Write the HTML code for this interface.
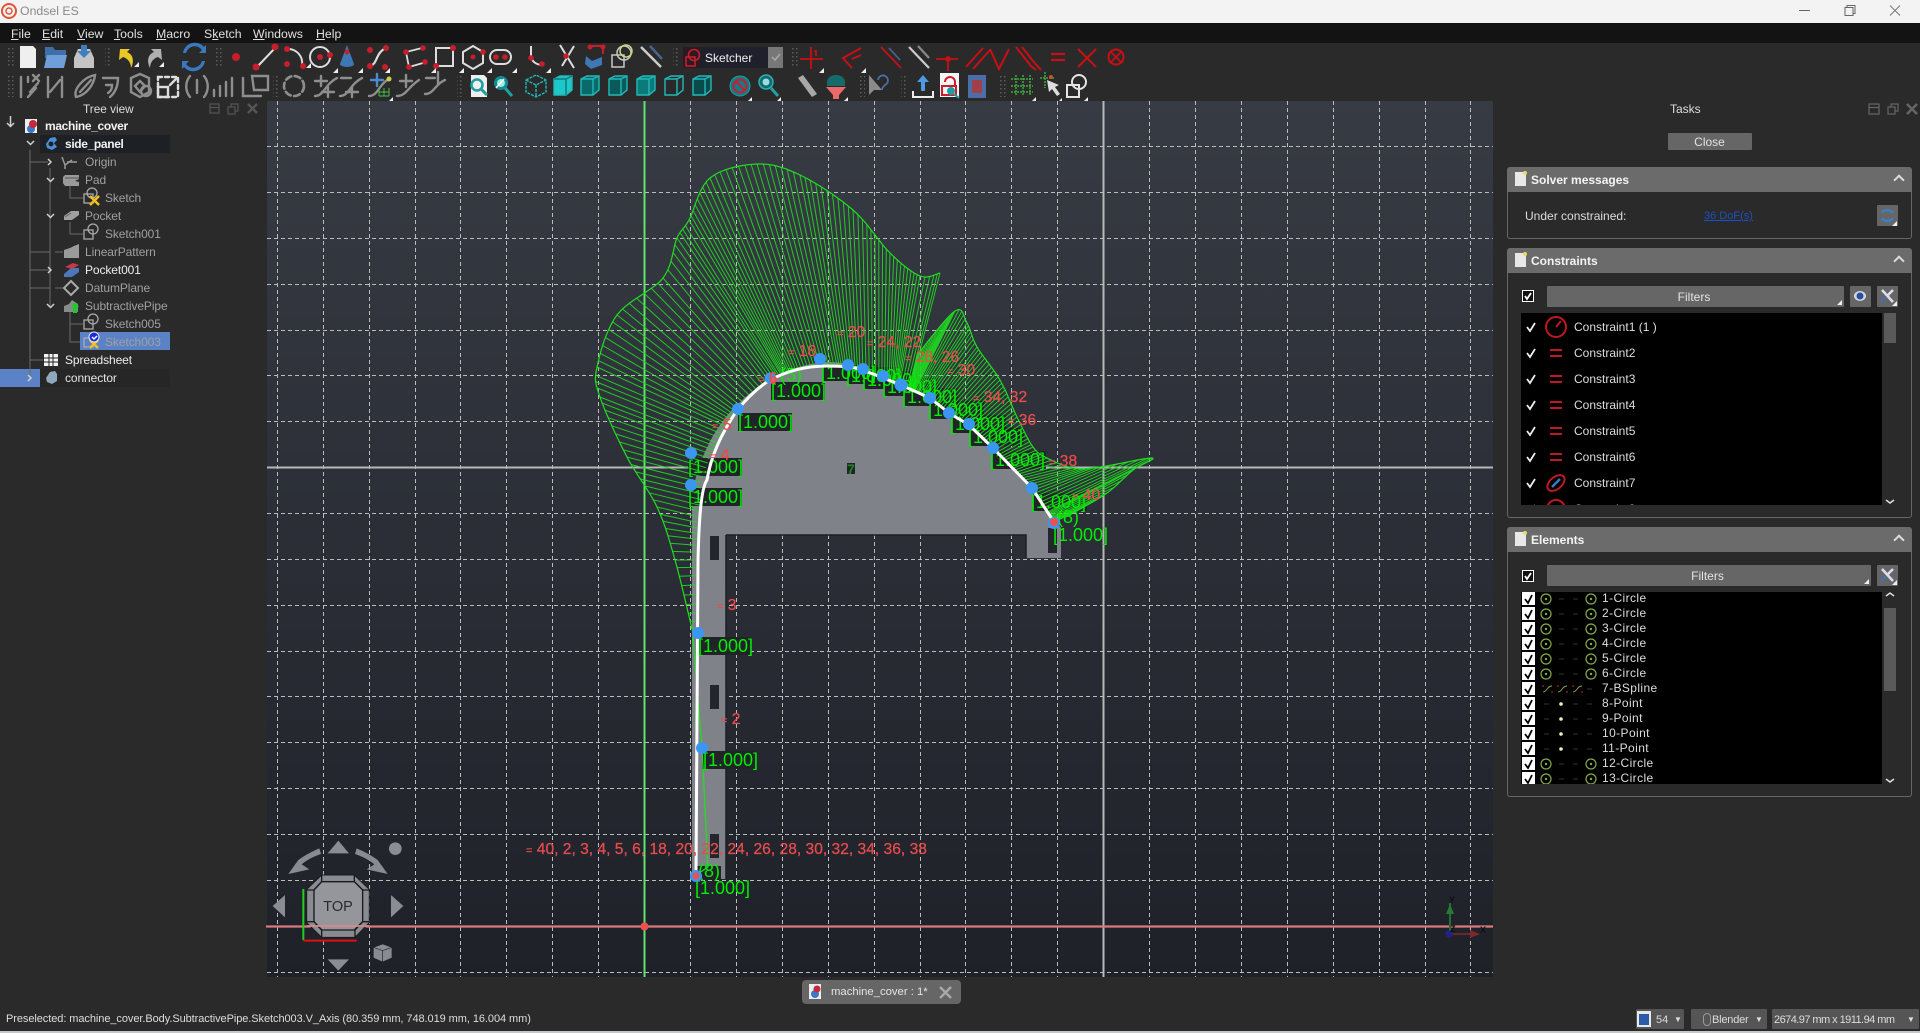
<!DOCTYPE html>
<html><head><meta charset="utf-8"><title>Ondsel ES</title>
<style>
html,body{margin:0;padding:0;width:1920px;height:1033px;overflow:hidden;background:#2a2a2a;font-family:"Liberation Sans",sans-serif;color:#ddd;font-size:12px}
.a{position:absolute;white-space:nowrap}
#title{left:0;top:0;width:1920px;height:23px;background:#f3f3f3}
#menu{left:0;top:23px;width:1920px;height:20px;background:#131313}
#menu span{position:absolute;top:4px;color:#e0e0e0;font-size:12.3px}
#menu u{text-decoration:underline}
.row{position:absolute;line-height:18px;height:18px;font-size:12px;color:#a0a0a0;letter-spacing:-.1px}
.row.bd{font-weight:bold;letter-spacing:-.35px;color:#f2f2f2}
.hdr{position:absolute;left:1507px;width:405px;height:25px;background:#6b6b6b;border-radius:3px 3px 0 0;color:#f4f4f4;font-weight:bold;font-size:12px;line-height:27px}
.hdr b{position:absolute;left:24px;top:0}
.hdr i{position:absolute;left:8px;top:5px;width:11px;height:14px;background:#e8e8e8;border-top-right-radius:3px}
.hdr i:after{content:"";position:absolute;right:-1px;top:-1px;width:4px;height:4px;background:#e8e060;border-radius:2px}
.hdr s{position:absolute;right:9px;top:9px;width:6px;height:6px;border-left:2px solid #ddd;border-top:2px solid #ddd;transform:rotate(45deg)}
.body{position:absolute;left:1507px;width:403px;border:1px solid #666;border-top:none;border-radius:0 0 3px 3px}
.btn{position:absolute;background:#666;border-radius:1px;color:#e4e4e4;text-align:center;font-size:12px}
.cb{position:absolute;width:10px;height:10px;border:1px solid #fff;background:#111}
.list{position:absolute;background:#000;overflow:hidden}
.c{position:absolute;left:53px;color:#ddd;font-size:12px;line-height:14px}
.e{position:absolute;left:81px;color:#ddd;font-size:12px;letter-spacing:.4px;line-height:14px}
.st{position:absolute;background:#555;color:#ddd;height:20px;line-height:22px;font-size:11px;border-radius:1px}
svg{position:absolute;left:0;top:0}
.lb{fill:#00ee00;font:18px "Liberation Sans",sans-serif}
.lr{fill:#212329}
.rd{fill:#e84c4c;stroke:#e84c4c;stroke-width:.25px;font:15.6px "Liberation Sans",sans-serif}
.sm{font-size:11px}
</style></head><body>
<div id="title" class="a"></div>
<div class="a" style="left:20px;top:4px;color:#8a8a8a;font-size:12.3px">Ondsel ES</div>
<svg width="1920" height="23" style="left:0;top:0">
<circle cx="9" cy="11" r="7" fill="none" stroke="#e0553a" stroke-width="2"/><circle cx="9" cy="11" r="3" fill="none" stroke="#e0553a" stroke-width="1.500"/>
<path d="M1799 10.500h11" stroke="#666" stroke-width="1"/>
<rect x="1845" y="7.500" width="8" height="8" fill="none" stroke="#666"/><path d="M1847 7.500v-2h8v8h-2" fill="none" stroke="#666"/>
<path d="M1890 5.500l10 10m0-10l-10 10" stroke="#777" stroke-width="1"/>
</svg>
<div id="menu" class="a">
<span style="left:11px"><u>F</u>ile</span><span style="left:42px"><u>E</u>dit</span><span style="left:77px"><u>V</u>iew</span><span style="left:114px"><u>T</u>ools</span><span style="left:156px"><u>M</u>acro</span><span style="left:204px">S<u>k</u>etch</span><span style="left:253px"><u>W</u>indows</span><span style="left:316px"><u>H</u>elp</span>
</div>

<!-- TOOLBARS -->
<svg width="1920" height="102" style="top:0">
<defs>
<pattern id="gd" width="4" height="4" patternUnits="userSpaceOnUse"><rect width="1.500" height="1.500" fill="#5c5c5c"/></pattern>
<g id="tri"><path d="M0 0l-5 5h5z" fill="#eee"/></g>
</defs>
<g fill="url(#gd)">
<rect x="8" y="46" width="7" height="22"/><rect x="105" y="46" width="7" height="22"/><rect x="216" y="46" width="7" height="22"/><rect x="673" y="46" width="7" height="22"/><rect x="791" y="46" width="7" height="22"/>
<rect x="8" y="75" width="7" height="22"/><rect x="273" y="75" width="7" height="22"/><rect x="457" y="75" width="7" height="22"/><rect x="858" y="75" width="7" height="22"/><rect x="901" y="75" width="7" height="22"/><rect x="999" y="75" width="7" height="22"/>
</g>
<!-- row 1 -->
<path d="M20 46h13l3 3v19H20z" fill="#efefef"/>
<path d="M45 47h8l2 3h11v8H45z" fill="#3f6ea8"/><path d="M47 55h20l-3 13H44z" fill="#6f9fd8"/>
<path d="M74 58l4-9h12l4 9v10H74z" fill="#c4c4c4"/><path d="M81 45h6v6h4l-7 7-7-7h4z" fill="#3f7fc0"/>
<path d="M120 49l-1 11 4-3c4 1 8 5 8 11 3-6 3-13-4-16l3-3z" fill="#e8c828"/><use href="#tri" x="139" y="62"/>
<path d="M161 49l1 11-4-3c-4 1-8 5-8 11-3-6-3-13 4-16l-3-3z" fill="#b0b0b0"/><use href="#tri" x="164" y="62"/>
<path d="M186 53a9 9 0 0 1 16-3l-3 3h7v-8l-2 2a12 12 0 0 0-21 6zM202 61a9 9 0 0 1-16 3l3-3h-7v8l2-2a12 12 0 0 0 21-6z" fill="#3a78c0"/>
<circle cx="236" cy="57" r="4" fill="#c81e2c"/>
<g fill="#c81e2c"><path d="M257 67l19-20" stroke="#ddd" stroke-width="2"/><circle cx="256" cy="67" r="3.500"/><circle cx="275" cy="47" r="3.500"/>
<path d="M287 49a14 14 0 0 1 15 16" stroke="#ddd" stroke-width="2" fill="none"/><circle cx="287" cy="49" r="3"/><circle cx="287" cy="64" r="3"/><circle cx="303" cy="66" r="3"/>
<circle cx="320" cy="57" r="10" fill="none" stroke="#ddd" stroke-width="2"/><circle cx="320" cy="57" r="3"/><circle cx="330" cy="55" r="3"/>
<path d="M340 64l7-19 7 19a7 3 0 0 1-14 0z" fill="#3d78b4"/><circle cx="347" cy="52" r="2.500"/>
<path d="M370 66c8-2 5-13 16-18" stroke="#ddd" stroke-width="2.200" fill="none"/><circle cx="370" cy="50" r="3"/><circle cx="386" cy="48" r="3"/><circle cx="370" cy="66" r="3"/><circle cx="385" cy="67" r="3"/>
<path d="M422 48l-16 4 3 15 14-4" stroke="#ddd" stroke-width="1.800" fill="none"/><circle cx="406" cy="52" r="2.800"/><circle cx="423" cy="48" r="2.800"/><circle cx="409" cy="67" r="2.800"/><circle cx="425" cy="62" r="2.800"/>
<rect x="436" y="48" width="17" height="18" fill="none" stroke="#ddd" stroke-width="2"/><circle cx="436" cy="66" r="3"/><circle cx="453" cy="48" r="3"/>
<path d="M473 46l10 6v11l-10 6-10-6V52z" fill="none" stroke="#ddd" stroke-width="2"/><circle cx="473" cy="57" r="2.500" /><circle cx="483" cy="52" r="2.800"/>
<rect x="490" y="50" width="21" height="14" rx="7" fill="none" stroke="#ddd" stroke-width="2"/><circle cx="496" cy="57" r="2.800"/><circle cx="505" cy="57" r="2.800"/>
<path d="M531 46v9c0 7 6 10 12 10" stroke="#ddd" stroke-width="2" fill="none"/><circle cx="531" cy="58" r="2.800"/><circle cx="542" cy="64" r="2.800"/>
<path d="M560 45l14 23M574 46l-12 20" stroke="#ddd" stroke-width="2"/><circle cx="566" cy="56" r="2.800"/>
<path d="M586 56l6 5 10-4v8l-11 4-6-5z" fill="#3f78b4"/><path d="M591 46h12v8" stroke="#c81e2c" stroke-width="2" fill="none"/><circle cx="590" cy="47" r="2.500"/><circle cx="603" cy="47" r="2.500"/>
</g>
<use href="#tri" x="311" y="63"/><use href="#tri" x="338" y="68"/><use href="#tri" x="363" y="68"/><use href="#tri" x="390" y="68"/><use href="#tri" x="436" y="68"/><use href="#tri" x="464" y="68"/><use href="#tri" x="492" y="68"/><use href="#tri" x="517" y="68"/><use href="#tri" x="551" y="68"/>
<g fill="none" stroke="#c8c8c8" stroke-width="1.500"><rect x="612" y="55" width="12" height="12"/><circle cx="624" cy="53" r="7"/><circle cx="626" cy="51" r="6" stroke="#c8d878"/></g>
<path d="M641 47l20 20" stroke="#ccc" stroke-width="2.500"/><path d="M650 46l12 13" stroke="#49648a" stroke-width="2.500"/>
<rect x="683" y="47" width="100" height="21" fill="#20202c"/><rect x="683" y="47" width="17" height="21" fill="#2c1a22"/>
<g fill="none" stroke="#c81e2c" stroke-width="1.600"><rect x="686" y="57" width="9" height="9"/><circle cx="694" cy="55" r="5.500"/></g>
<text x="705" y="62" fill="#f0f0f0" font-size="12" font-family="Liberation Sans">Sketcher</text>
<rect x="768" y="47" width="15" height="21" fill="#777"/><path d="M772 57l3 3 5-6" stroke="#aaa" stroke-width="1.500" fill="none"/>
<!-- constraints -->
<g fill="none" stroke="#c81014" stroke-width="1.800">
<path d="M800 59h23M811 47v22M814 51h2v5"/><use href="#tri" x="824" y="68" stroke="none"/>
<path d="M861 48l-18 10 9 10M861 55l-9 4" stroke-width="2"/><use href="#tri" x="866" y="68" stroke="none"/>
<path d="M881 47l20 21"/><path d="M889 48l11 12" stroke="#4a5c88"/>
<path d="M909 47l20 21" stroke="#ccc" stroke-width="2.200"/><path d="M918 46l11 12" stroke="#8a8a8a" stroke-width="2.200"/>
<path d="M936 59h22M948 59v12"/><circle cx="948" cy="59" r="2" fill="#c81014"/>
<path d="M966 67l17-19M973 69l17-19" stroke-width="2"/>
<path d="M990 49l9 20 10-20" stroke-width="2"/>
<path d="M1016 47l15 19 5 4M1022 47l11 14 8 9" stroke-width="2"/>
<path d="M1051 54h14M1051 60h14" stroke-width="2.200"/>
<path d="M1078 49l9 9-9 9M1096 49l-9 9 9 9" stroke-width="2"/>
<circle cx="1116" cy="57" r="7.500" stroke-width="2"/><path d="M1110 51l12 12m0-12l-12 12"/>
</g>
<!-- row 2 grays -->
<g fill="none" stroke="#8e8e8e" stroke-width="2.400" stroke-linecap="round">
<path d="M21 77v20M28 77v5M28 97l8-9M30 92l8-9M33 75l6 6m0-6l-6 6"/>
<path d="M48 77v20M62 77v20M50 92l10-12"/>
<path d="M76 97c-3-8 8-20 19-22-1 9-8 20-19 22zM80 92l11-12"/>
<path d="M103 78h15c0 8-3 15-8 19M106 85h6c0 4-1 6-4 8"/>
<path d="M131 78l9-4 9 4v14l-9 5-9-5zM135 86l5-5 5 5-5 6z"/><circle cx="146" cy="91" r="5"/>
<path d="M158 77h20v20h-20z" stroke-dasharray="4 3" stroke="#ddd"/><rect x="158" y="87" width="10" height="10" stroke="#ddd"/><path d="M170 85l6-6" stroke="#ddd"/>
<path d="M190 76c-5 6-5 15 0 21M204 76c5 6 5 15 0 21M197 80v13"/>
<path d="M214 96v-6M220 96v-10M226 96v-14M232 96v-18"/>
<path d="M243 78v18h18M252 76h16v14h-14z"/>
<circle cx="294" cy="86" r="10" stroke-dasharray="6 3.500" stroke-width="2.600"/>
<path d="M315 96c9 0 10-12 22-18M321 76v10M315 81h12M328 87v10M322 92h12"/>
<path d="M340 96c9 0 10-12 22-18M341 78h10M352 87v10M346 92h12"/>
<path d="M369 96c9 0 10-12 20-17"/><path d="M371 80h12M377 74v12" stroke="#4c8ad0"/>
<path d="M397 96c9 0 10-8 22-16M400 81h12M406 75v12"/>
<path d="M425 94c9 0 10-10 20-14M426 78h9M438 72v12"/>
</g>
<circle cx="389" cy="79" r="2.500" fill="#c8d050"/><path d="M379 92h10M379 88v8M384 88v8M389 88v8M379 96h10" stroke="#4cc04c" fill="none"/><use href="#tri" x="393" y="97"/>
<!-- view icons -->
<path d="M471 75h13l3 3v19h-16z" fill="#efefef"/><circle cx="477" cy="85" r="5.500" fill="none" stroke="#1ea0a0" stroke-width="2.500"/><path d="M481 89l6 6" stroke="#1ea0a0" stroke-width="3"/>
<circle cx="501" cy="83" r="7" fill="#158a96"/><circle cx="501" cy="83" r="4" fill="#9ed"/><path d="M505 88l7 8" stroke="#1ea0a0" stroke-width="3"/><path d="M496 88l8-9" stroke="#fff" stroke-width="1.500"/>
<g fill="none" stroke="#22b8b8" stroke-width="1.400">
<path d="M526 80l10-5 10 5v12l-10 5-10-5zM526 80l10 5 10-5M536 85v12" stroke-dasharray="3 1"/>
<path d="M554 79l6-3h12v14l-6 5h-12z" fill="#1fc8c8"/><path d="M554 79h12v16M566 79l6-3" stroke="#0c7878"/>
<path d="M581 79l6-3h12v14l-6 5h-12z" fill="#0a6a6a"/><path d="M581 79h12v16M593 79l6-3"/>
<path d="M609 79l6-3h12v14l-6 5h-12z" fill="#0a5a5a"/><path d="M609 79h12v16M621 79l6-3"/>
<path d="M637 79l6-3h12v14l-6 5h-12z" fill="#0c7a7a"/><path d="M637 79h12v16M649 79l6-3"/>
<path d="M665 79l6-3h12v14l-6 5h-12z"/><path d="M665 79h12v16M677 79l6-3"/>
<path d="M693 79l6-3h12v14l-6 5h-12z" fill="#0a4a4a"/><path d="M693 79h12v16M705 79l6-3"/>
</g>
<circle cx="740" cy="86" r="10" fill="#137a8a" stroke="#1ea0a0"/><circle cx="740" cy="86" r="6.500" fill="none" stroke="#d01c2a" stroke-width="2"/><path d="M736 81l9 10" stroke="#d01c2a" stroke-width="2"/><use href="#tri" x="752" y="97"/>
<circle cx="766" cy="82" r="7" fill="#146a74" stroke="#2ab0b0" stroke-width="1.500"/><circle cx="766" cy="82" r="3.500" fill="#9dd"/><path d="M771 88l7 8" stroke="#20a0a0" stroke-width="3"/><use href="#tri" x="781" y="97"/>
<path d="M798 78l5-3 14 19-5 3z" fill="#a8a8a8"/>
<path d="M827 82a9 7 0 0 1 18 0v4h-18z" fill="#176a6a"/><path d="M826 87h20l-7 8v4h-6v-4z" fill="#e86a6a"/><use href="#tri" x="848" y="97"/>
<path d="M869 75v20l5-5h8z" fill="#8a8a8a"/><path d="M878 80a5 5 0 1 1 7 5c-2 2-3 3-3 5" fill="none" stroke="#4c6ea0" stroke-width="1.800"/>
<path d="M913 91v6h20v-6" fill="none" stroke="#eee" stroke-width="2"/><path d="M923 75l6 7h-4v9h-4v-9h-4z" fill="#4c9ae0"/>
<rect x="940" y="73" width="19" height="24" fill="#f4f4f4"/><path d="M945 82a5 5 0 0 1 10 0v4M942 86h14v9h-14z" fill="none" stroke="#d01c2a" stroke-width="2"/><circle cx="951" cy="91" r="4" fill="#1aa0a0"/><path d="M954 94l5 4" stroke="#1aa0a0" stroke-width="2"/>
<rect x="968" y="75" width="18" height="23" fill="#4c6ea8"/><rect x="972" y="80" width="10" height="13" fill="#a0404a"/>
<g stroke="#3fa83f" stroke-width="1.500" stroke-dasharray="2 1"><path d="M1016 75v20M1023 75v20M1030 75v20M1011 79h22M1011 86h22M1011 92h22"/></g><use href="#tri" x="1036" y="97"/>
<path d="M1045 72v16M1040 78h14" stroke="#3fa83f" stroke-width="1.500" stroke-dasharray="2 1"/><circle cx="1051" cy="77" r="2" fill="#d05020"/><path d="M1047 80l12 5-4 2 5 7-3 2-5-7-3 3z" fill="#ddd"/><use href="#tri" x="1062" y="98"/>
<g fill="none" stroke="#e4e4e4" stroke-width="2"><rect x="1067" y="85" width="12" height="12"/><circle cx="1079" cy="82" r="7"/></g><use href="#tri" x="1088" y="97"/>
</svg>

<!-- TREE -->
<div class="a" style="left:83px;top:102px;color:#ddd;font-size:11.800px;">Tree view</div>
<svg width="270" height="290" style="top:100px" viewBox="0 100 270 290">
<g fill="none" stroke="#555" stroke-width="1.200"><rect x="210" y="104" width="9" height="9"/><path d="M210 107.500h9"/><rect x="228" y="107" width="7" height="7"/><path d="M231 107v-3h7v7h-3"/><path d="M248 104l9 9m0-9l-9 9" stroke-width="2.500"/></g>
</svg>
<div class="a" style="left:40px;top:135px;width:130px;height:18px;background:#1d2126"></div>
<div class="a" style="left:80px;top:332px;width:90px;height:18px;background:#5b82c6"></div>
<div class="a" style="left:0;top:369px;width:40px;height:18px;background:#5b82c6"></div>
<div class="a" style="left:40px;top:369px;width:130px;height:18px;background:#262626"></div>
<svg width="270" height="400" style="top:0">
<g stroke="#6a6a6a" fill="none">
<path d="M30 150V378M50 168V306M30 360h13M30 162h18M55 252h8M55 288h8M30 252h20M30 288h20M30 270h20M70 186v12h13M70 222v12h13M70 312v30h10M70 324h13"/>
</g>
<g fill="none" stroke="#d0d0d0" stroke-width="1.500">
<path d="M7 123l3.500 3.500 3.500-3.500M27 141l3.500 3.500 3.500-3.500M47 178l3.500 3.500 3.500-3.500M47 214l3.500 3.500 3.500-3.500M47 304l3.500 3.500 3.500-3.500M48 159l3 3-3 3M48 267l3 3-3 3M28 375l3 3-3 3"/><path d="M10.500 116v10"/></g>
<!-- icons -->
<rect x="25" y="119" width="12" height="14" fill="#eee"/><circle cx="31" cy="129" r="4" fill="#3a78c8"/><circle cx="33" cy="124" r="4" fill="#c82838"/>
<path d="M46 144l4-6 5-1 2 3-3 3 3 4-5 3-5-2z" fill="#4c90d8"/><circle cx="51" cy="144" r="2.500" fill="#1d2126"/>
<path d="M46 378l4-6 5-1 2 3v7l-5 3-5-2z" fill="#90a8bc"/>
<path d="M65 165l7-5m-7 5v4m0-4l-3-8M67 162h10" stroke="#999" stroke-width="1.500" fill="none"/>
<path d="M65 175h14v4l-4 2 4 1v4h-14l-2-3v-6z" fill="#9a9a9a"/><path d="M65 178h14" stroke="#555"/>
<path d="M64 216l7-5h8v4l-7 5h-8z" fill="#a0a0a0"/><path d="M65 217l6-4" stroke="#666"/>
<path d="M64 258v-8l6-2 4-2 5-2v14z" fill="#9a9a9a"/>
<path d="M71 281l7 7-7 7-7-7z" fill="none" stroke="#aaa" stroke-width="2"/>
<path d="M64 274l7-6 8 0v4l-7 5h-8z" fill="#4a78b8"/><path d="M65 267l8-4 6 2-7 4z" fill="#c83a48"/>
<path d="M64 312v-6l5-2 3-4 6 4v8z" fill="#8a8a8a"/><path d="M75 302l4 5h-2v6h-4v-6h-2z" fill="#1aca2a"/>
<g fill="#f4f4f4"><rect x="44" y="354" width="14" height="12"/></g><path d="M44 358h14M44 362h14M49 354v12M53 354v12" stroke="#222"/>
<g fill="none" stroke="#aaa" stroke-width="1.300"><rect x="84" y="194" width="9" height="9"/><circle cx="92" cy="193" r="5"/></g>
<path d="M90 196l9 9m0-9l-9 9" stroke="#f0c020" stroke-width="2.500"/>
<g fill="none" stroke="#aaa" stroke-width="1.300"><rect x="84" y="230" width="9" height="9"/><circle cx="93" cy="229" r="5"/><rect x="84" y="320" width="9" height="9"/><circle cx="93" cy="319" r="5"/><rect x="84" y="338" width="9" height="9"/></g>
<path d="M90 340l8 8m0-8l-8 8" stroke="#f0c020" stroke-width="2.500"/>
<circle cx="94" cy="337" r="5" fill="#1a2ad8" stroke="#eee"/><path d="M92 337l2 2 3-3" stroke="#fff" fill="none" stroke-width="1.500"/>
</svg>
<div class="row bd" style="left:45px;top:117px">machine_cover</div>
<div class="row bd" style="left:65px;top:135px">side_panel</div>
<div class="row" style="left:85px;top:153px">Origin</div>
<div class="row" style="left:85px;top:171px">Pad</div>
<div class="row" style="left:105px;top:189px">Sketch</div>
<div class="row" style="left:85px;top:207px">Pocket</div>
<div class="row" style="left:105px;top:225px">Sketch001</div>
<div class="row" style="left:85px;top:243px">LinearPattern</div>
<div class="row" style="left:85px;top:261px;color:#eee">Pocket001</div>
<div class="row" style="left:85px;top:279px">DatumPlane</div>
<div class="row" style="left:85px;top:297px">SubtractivePipe</div>
<div class="row" style="left:105px;top:315px">Sketch005</div>
<div class="row" style="left:105px;top:333px">Sketch003</div>
<div class="row" style="left:65px;top:351px;color:#eee">Spreadsheet</div>
<div class="row" style="left:65px;top:369px;color:#e4e4e4">connector</div>

<!-- VIEW -->
<svg width="1920" height="1033" style="top:0" id="v">
<defs><linearGradient id="bg" x1="0" y1="0" x2="0" y2="1"><stop offset="0" stop-color="#373b44"/><stop offset="1" stop-color="#1f2129"/></linearGradient></defs>
<rect x="267" y="101" width="1226" height="876" fill="url(#bg)"/>
<g id="grid" stroke="#bcbcbc" stroke-width="1" stroke-dasharray="4 3" fill="none">
<path d="M267 146.500H1493M267 192.500H1493M267 238.500H1493M267 284.500H1493M267 330.500H1493M267 375.500H1493M267 421.500H1493M267 513.500H1493M267 559.500H1493M267 605.500H1493M267 651.500H1493M267 696.500H1493M267 742.500H1493M267 788.500H1493M267 834.500H1493M267 880.500H1493M267 972.500H1493"/>
<path d="M277.500 101V977M323.500 101V977M369.500 101V977M415.500 101V977M460.500 101V977M506.500 101V977M552.500 101V977M598.500 101V977M690.500 101V977M736.500 101V977M782.500 101V977M828.500 101V977M874.500 101V977M920.500 101V977M965.500 101V977M1011.500 101V977M1057.500 101V977M1149.500 101V977M1195.500 101V977M1241.500 101V977M1287.500 101V977M1333.500 101V977M1379.500 101V977M1425.500 101V977M1470.500 101V977"/>
</g>
<path d="M267 467.500H1493M1103.500 101V977" stroke="#b8b8b8" stroke-width="2"/>
<path d="M266 926.500H1493" stroke="#d87a7a" stroke-width="2.200"/>
<path d="M644.500 101V977" stroke="#5fe46c" stroke-width="2"/>
<circle cx="644.500" cy="926.500" r="4" fill="#ee5050"/>
<!-- part -->
<path d="M692 879V500C694 470 712 428 737 405C760 382 790 365 825 362C860 362 880 372 903 385L930 398L949 411L970 424L993 447L1032 488L1061 528V558H1026V535H726V879Z" fill="#80828a"/>
<path d="M726 535H1026V558" fill="none" stroke="#1c1e24" stroke-width="1.500"/><path d="M726 535V879" stroke="#1c1e24" stroke-width="1.500"/>
<g fill="#24262d"><rect x="710" y="536" width="9" height="24"/><rect x="710" y="685" width="9" height="24"/><rect x="710" y="834" width="9" height="24"/><rect x="1048" y="528" width="9" height="25"/></g>
<!-- label backgrounds -->
<g class="lr">
<rect x="823" y="365" width="54" height="16"/><rect x="848" y="367" width="54" height="17"/><rect x="864" y="371" width="54" height="18"/><rect x="884" y="378" width="54" height="18"/><rect x="904" y="388" width="54" height="18"/><rect x="930" y="401" width="54" height="18"/><rect x="952" y="415" width="54" height="18"/><rect x="970" y="428" width="54" height="18"/><rect x="992" y="451" width="54" height="18"/><rect x="1033" y="493" width="54" height="18"/><rect x="771" y="382" width="54" height="18"/><rect x="738" y="413" width="54" height="18"/><rect x="688" y="458" width="54" height="18"/><rect x="688" y="488" width="54" height="18"/><rect x="697" y="637" width="54" height="18"/><rect x="702" y="751" width="54" height="18"/><rect x="697" y="866" width="24" height="13"/>
<rect x="847" y="463" width="8" height="11"/>
</g>
<g id="comb"></g>
<path d="M693 637L702 748L708 867L696 875" fill="none" stroke="#22dd22" stroke-width="1.300"/>
<!-- labels text -->
<g class="lb" transform="translate(-3,0)">
<text x="824" y="379">[1.000]</text><text x="849" y="382">[1.000]</text><text x="865" y="386">[1.000]</text><text x="885" y="393">[1.000]</text><text x="905" y="403">[1.000]</text><text x="931" y="416">[1.000]</text><text x="953" y="430">[1.000]</text><text x="971" y="443">[1.000]</text><text x="993" y="466">[1.000]</text><text x="1034" y="508">[1.000]</text><text x="1056" y="541">[1.000]</text>
<text x="774" y="397">[1.000]</text><text x="741" y="428">[1.000]</text><text x="691" y="473">[1.000]</text><text x="691" y="503">[1.000]</text><text x="701" y="652">[1.000]</text><text x="706" y="766">[1.000]</text><text x="698" y="894">[1.000]</text>
<text x="701" y="877">(8)</text><text x="1060" y="523">(8)</text><text x="783" y="381">(5)</text>
<text x="850" y="474" style="font-size:14px;font-weight:bold;fill:#1a8a1a">7</text>
</g>
<path d="M696 875L698 560C699 520 701 488 707 480C711 455 722 432 738 409C750 395 760 386 770 380C785 372 805 366 827 366C840 366 855 367 863 370L901 385L930 398L949 413L969 425L993 448L1032 488L1054 522" fill="none" stroke="#fff" stroke-width="3" stroke-linejoin="round"/>
<g fill="#3a96f0">
<circle cx="691" cy="453" r="6"/><circle cx="691" cy="485" r="6"/><circle cx="738" cy="409" r="6"/><circle cx="770" cy="378" r="5.500"/><circle cx="820" cy="359" r="6"/><circle cx="848" cy="365" r="6"/><circle cx="863" cy="369" r="6"/><circle cx="883" cy="376" r="6"/><circle cx="901" cy="385" r="6.500"/><circle cx="930" cy="398" r="6"/><circle cx="949" cy="413" r="6"/><circle cx="969" cy="424" r="6"/><circle cx="993" cy="448" r="6"/><circle cx="1032" cy="488" r="6"/><circle cx="1054" cy="523" r="6"/><circle cx="698" cy="633" r="6"/><circle cx="702" cy="748" r="6"/><circle cx="696" cy="876" r="6"/>
</g>
<circle cx="1054" cy="522" r="4" fill="#ee5050"/><circle cx="696" cy="876" r="3.500" fill="#ee5050"/><circle cx="773" cy="381" r="3" fill="#e06070"/>
<!-- red text -->
<g class="rd">
<text x="526" y="854"><tspan class="sm">=</tspan> 40, 2, 3, 4, 5, 6, 18, 20, 22, 24, 26, 28, 30, 32, 34, 36, 38</text>
<text x="788" y="356"><tspan class="sm">=</tspan> 18</text><text x="837" y="337"><tspan class="sm">=</tspan> 20</text><text x="867" y="347"><tspan class="sm">=</tspan> 24, 22</text><text x="905" y="362"><tspan class="sm">=</tspan> 28, 26</text><text x="947" y="375"><tspan class="sm">=</tspan> 30</text><text x="973" y="402"><tspan class="sm">=</tspan> 34, 32</text><text x="1008" y="425"><tspan class="sm">=</tspan> 36</text><text x="1049" y="466"><tspan class="sm">=</tspan> 38</text><text x="1072" y="500"><tspan class="sm">=</tspan> 40</text><text x="712" y="430"><tspan class="sm">=</tspan> 5</text><text x="710" y="460"><tspan class="sm">=</tspan> 4</text><text x="758" y="383"><tspan class="sm">=</tspan> 6</text><text x="717" y="610"><tspan class="sm">=</tspan> 3</text><text x="721" y="724"><tspan class="sm">=</tspan> 2</text>
</g>
<!-- nav cube -->
<g transform="translate(260,820) scale(.3333)">
<path d="M185 165H283L328 208V308L285 352H185L140 308V208Z" fill="#888b91" stroke="#1a1a1a" stroke-width="3"/>
<path d="M185 185H283L308 210V305L283 330H185L162 305V210Z" fill="#94969c" stroke="#1a1a1a" stroke-width="4"/>
<path d="M185 165V185L162 210H140M283 165V185L308 210H328M285 352V330L308 305H328M185 352V330L162 305H140" fill="none" stroke="#1a1a1a" stroke-width="4"/>
<path d="M235 62L267 100H203ZM235 452L203 418H267ZM38 258L75 225V292ZM430 258L393 225V292Z" fill="#8a8d93"/>
<path d="M85 162L115 120C135 105 155 95 178 85L183 102C160 110 140 120 125 133L148 148Z" fill="#888b91"/>
<path d="M383 162L353 120C333 105 313 95 290 85L285 102C308 110 328 120 343 133L320 148Z" fill="#888b91"/>
<circle cx="406" cy="86" r="19" fill="#8a8d93"/>
<path d="M368 372l28 10v32l-28 12-28-12v-32z" fill="#888b91" stroke="#222" stroke-width="2"/><path d="M340 382l28 10 28-10M368 392v34" fill="none" stroke="#222" stroke-width="2"/>
<path d="M130 207V360" stroke="#20d020" stroke-width="6"/><path d="M130 362H290" stroke="#e01010" stroke-width="6"/>
<path d="M140 318H328" stroke="#d88a8a" stroke-width="5"/>
</g>
<text x="338" y="911" text-anchor="middle" font-family="Liberation Sans" font-size="14.500" fill="#2a2a2a">TOP</text>
<!-- axis cross -->
<path d="M1450 935V903" stroke="#256e32" stroke-width="2"/><path d="M1450 904l-4 10h8z" fill="#257a38"/>
<path d="M1450 934h25" stroke="#642830" stroke-width="2"/><path d="M1480 934l-10-4v8z" fill="#80262c"/>
<circle cx="1449" cy="934" r="3.500" fill="#202090"/>
<g font-family="Liberation Sans" font-size="9" font-weight="bold" fill="#111"><text x="1449" y="903">Y</text><text x="1480" y="933">X</text><text x="1450" y="932">Z</text></g>
</svg>

<!-- RIGHT PANEL -->
<div class="a" style="left:1670px;top:102px;color:#ddd;font-size:12px">Tasks</div>
<svg width="1920" height="130" style="top:0">
<g fill="none" stroke="#666" stroke-width="1.200"><rect x="1869" y="104" width="10" height="10"/><path d="M1869 107.500h10"/><rect x="1888" y="107" width="7" height="7"/><path d="M1891 107v-3h7v7h-3"/><path d="M1907 104l10 10m0-10l-10 10" stroke-width="2.500"/></g>
</svg>
<div class="btn" style="left:1668px;top:133px;width:84px;height:17px;line-height:18px;text-indent:-1px">Close</div>

<div class="hdr" style="top:167px"><i></i><b>Solver messages</b><s></s></div>
<div class="body" style="top:192px;height:46px"></div>
<div class="a" style="left:1525px;top:209px;font-size:12px;color:#ddd">Under constrained:</div>
<div class="a" style="left:1704px;top:210px;font-size:11px;color:#1c50c4;text-decoration:underline">36 DoF(s)</div>
<div class="btn" style="left:1877px;top:205px;width:21px;height:21px"><svg width="21" height="21"><path d="M5 8a6 5 0 0 1 11 0M16 13a6 5 0 0 1-11 0" fill="none" stroke="#3f7fc0" stroke-width="2.500"/><path d="M20 16l-5 5h5z" fill="#eee"/></svg></div>

<div class="hdr" style="top:248px"><i></i><b>Constraints</b><s></s></div>
<div class="body" style="top:273px;height:244px"></div>
<div class="cb" style="left:1522px;top:290px"><svg width="10" height="10"><path d="M2 5l2 3 4-6" stroke="#fff" fill="none" stroke-width="1.800"/></svg></div>
<div class="btn" style="left:1547px;top:286px;width:297px;height:21px;line-height:23px;text-indent:-3px">Filters<svg width="297" height="21"><path d="M295 19l-5 0 5-5z" fill="#eee"/></svg></div>
<div class="btn" style="left:1850px;top:286px;width:21px;height:21px"><svg width="21" height="21"><ellipse cx="10" cy="10" rx="6" ry="5" fill="#cfd8e8"/><circle cx="10" cy="10" r="3.500" fill="#2a4f9a"/></svg></div>
<div class="btn" style="left:1877px;top:286px;width:21px;height:21px"><svg width="21" height="21"><path d="M5 4l11 12M16 4l-5 5" stroke="#dde" stroke-width="2.500"/><path d="M4 16l5-5" stroke="#4a6ea8" stroke-width="3"/><path d="M20 15l-5 5h5z" fill="#eee"/></svg></div>
<div class="list" style="left:1521px;top:313px;width:361px;height:192px">
<div class="c" style="top:7px">Constraint1 (1 )</div><div class="c" style="top:33px">Constraint2</div><div class="c" style="top:59px">Constraint3</div><div class="c" style="top:85px">Constraint4</div><div class="c" style="top:111px">Constraint5</div><div class="c" style="top:137px">Constraint6</div><div class="c" style="top:163px">Constraint7</div><div class="c" style="top:189px">Constraint8</div>
<svg width="52" height="192">
<g fill="none" stroke="#eee" stroke-width="1.800"><path d="M6 14l3 4 5-8M6 40l3 4 5-8M6 66l3 4 5-8M6 92l3 4 5-8M6 118l3 4 5-8M6 144l3 4 5-8M6 170l3 4 5-8M6 196l3 4 5-8"/></g>
<g fill="none" stroke="#c01820" stroke-width="2"><circle cx="35" cy="14" r="10"/><path d="M35 14l5-6"/><path d="M29 37h12M29 43h12M29 63h12M29 69h12M29 89h12M29 95h12M29 115h12M29 121h12M29 141h12M29 147h12"/><ellipse cx="35" cy="170" rx="10" ry="6" transform="rotate(-40 35 170)"/><circle cx="35" cy="196" r="9"/></g>
<path d="M31 174l8-8" stroke="#3a78c8" stroke-width="2.500"/>
</svg></div>
<div class="a" style="left:1884px;top:313px;width:12px;height:30px;background:#5a5a5a"></div>
<svg width="1920" height="1033" style="top:0;pointer-events:none">
<path d="M1886 500l4 3 4-3" fill="none" stroke="#ddd" stroke-width="1.500"/>
<path d="M1886 596l4-3 4 3M1886 779l4 3 4-3" fill="none" stroke="#ddd" stroke-width="1.500"/>
</svg>

<div class="hdr" style="top:527px"><i></i><b>Elements</b><s></s></div>
<div class="body" style="top:552px;height:244px"></div>
<div class="cb" style="left:1522px;top:570px"><svg width="10" height="10"><path d="M2 5l2 3 4-6" stroke="#fff" fill="none" stroke-width="1.800"/></svg></div>
<div class="btn" style="left:1547px;top:565px;width:324px;height:21px;line-height:23px;text-indent:-3px">Filters<svg width="324" height="21"><path d="M322 19l-5 0 5-5z" fill="#eee"/></svg></div>
<div class="btn" style="left:1877px;top:565px;width:21px;height:21px"><svg width="21" height="21"><path d="M5 4l11 12M16 4l-5 5" stroke="#dde" stroke-width="2.500"/><path d="M4 16l5-5" stroke="#4a6ea8" stroke-width="3"/><path d="M20 15l-5 5h5z" fill="#eee"/></svg></div>
<div class="list" style="left:1521px;top:592px;width:361px;height:192px">
<div class="e" style="top:-1px">1-Circle</div><div class="e" style="top:14px">2-Circle</div><div class="e" style="top:29px">3-Circle</div><div class="e" style="top:44px">4-Circle</div><div class="e" style="top:59px">5-Circle</div><div class="e" style="top:74px">6-Circle</div><div class="e" style="top:89px">7-BSpline</div><div class="e" style="top:104px">8-Point</div><div class="e" style="top:119px">9-Point</div><div class="e" style="top:134px">10-Point</div><div class="e" style="top:149px">11-Point</div><div class="e" style="top:164px">12-Circle</div><div class="e" style="top:179px">13-Circle</div>
<svg width="80" height="192">
<defs>
<g id="ck"><rect x="1" y="0" width="13" height="13" fill="#fff"/><path d="M4 7l3 4 4-8" stroke="#000" fill="none" stroke-width="1.800"/></g>
<g id="cr"><circle cx="25" cy="7" r="5" fill="none" stroke="#86aa46" stroke-width="1.200"/><circle cx="25" cy="7" r="1.200" fill="#86aa46"/><path d="M38 7h5M52 7h5" stroke="#333"/><circle cx="70" cy="7" r="5" fill="none" stroke="#86aa46" stroke-width="1.200"/><circle cx="70" cy="7" r="1.200" fill="#86aa46"/></g>
<g id="pt"><path d="M23 7h5M52 7h5M66 7h5" stroke="#333"/><circle cx="40" cy="7" r="1.800" fill="#f0f0c0"/></g>
<g id="bs"><path d="M22 10c4 0 4-6 9-6M37 10c4 0 4-6 9-6M52 10c4 0 4-6 9-6" fill="none" stroke="#8a9a46"/><path d="M21 4h2M30 10h2M36 4h2M45 10h2M51 4h2M60 10h2" stroke="#c03028"/><path d="M66 7h5" stroke="#333"/></g>
</defs>
<use href="#ck" y="0"/><use href="#cr" y="0"/><use href="#ck" y="15"/><use href="#cr" y="15"/><use href="#ck" y="30"/><use href="#cr" y="30"/><use href="#ck" y="45"/><use href="#cr" y="45"/><use href="#ck" y="60"/><use href="#cr" y="60"/><use href="#ck" y="75"/><use href="#cr" y="75"/><use href="#ck" y="90"/><use href="#bs" y="90"/><use href="#ck" y="105"/><use href="#pt" y="105"/><use href="#ck" y="120"/><use href="#pt" y="120"/><use href="#ck" y="135"/><use href="#pt" y="135"/><use href="#ck" y="150"/><use href="#pt" y="150"/><use href="#ck" y="165"/><use href="#cr" y="165"/><use href="#ck" y="180"/><use href="#cr" y="180"/>
</svg></div>
<div class="a" style="left:1884px;top:608px;width:12px;height:83px;background:#5a5a5a"></div>

<!-- BOTTOM -->
<div class="a" style="left:802px;top:980px;width:159px;height:24px;background:#666;border-radius:4px"></div>
<svg width="1920" height="1033" style="top:0;pointer-events:none">
<rect x="809" y="984" width="12" height="15" fill="#eee"/><circle cx="815" cy="994" r="4" fill="#3a78c8"/><circle cx="817" cy="989" r="3.500" fill="#c82838"/>
<path d="M940 987l11 11m0-11l-11 11" stroke="#a8a8a8" stroke-width="2.500"/>
</svg>
<div class="a" style="left:831px;top:986px;font-size:11.300px;color:#e4e4e4">machine_cover : 1*</div>
<div class="a" style="left:6px;top:1013px;font-size:11px;letter-spacing:-.07px;color:#ddd">Preselected: machine_cover.Body.SubtractivePipe.Sketch003.V_Axis (80.359 mm, 748.019 mm, 16.004 mm)</div>
<div class="st" style="left:1636px;top:1009px;width:48px"><span style="position:absolute;left:1px;top:2px;width:14px;height:16px;background:#e8e8e8"></span><span style="position:absolute;left:3px;top:5px;width:10px;height:11px;background:#2a5ca8"></span><span style="position:absolute;left:20px">54</span><span style="position:absolute;left:38px;font-size:8px">▼</span></div>
<div class="st" style="left:1691px;top:1009px;width:76px"><span style="position:absolute;left:12px;top:4px;width:6px;height:11px;border:1px solid #999;border-radius:4px"></span><span style="position:absolute;left:21px;letter-spacing:-.2px">Blender</span><span style="position:absolute;left:64px;font-size:8px">▼</span></div>
<div class="st" style="left:1772px;top:1009px;width:147px"><span style="position:absolute;left:2px;letter-spacing:-.55px">2674.97 mm x 1911.94 mm</span><span style="position:absolute;left:135px;font-size:8px">▼</span></div>
<div class="a" style="left:0;top:1031px;width:1920px;height:2px;background:#c4c8c8"></div>

<script>
(function(){
var P=[[[693,633],[698,633]],[[675,560],[698,560]],[[657,507],[699,517]],[[627,457],[703,477]],[[600,397],[717,443]],[[597,367],[727,427]],[[617,315],[738,409]],[[663,278],[760,388]],[[677,238],[773,377]],[[689,220],[780,373]],[[710,178],[793,370]],[[757,164],[817,367]],[[800,175],[837,366]],[[853,210],[860,368]],[[890,253],[887,378]],[[920,276],[900,383]],[[940,273],[910,389]]];
var Q=[[[917,355],[910,389]],[[955,311],[915,391]],[[967,323],[922,394]],[[977,347],[935,402]],[[1000,380],[960,420]],[[1017,417],[985,441]],[[1033,447],[1005,460]],[[1047,458],[1015,470]],[[1073,468],[1025,480]],[[1100,467],[1035,493]],[[1152,458],[1045,510]],[[1133,470],[1049,514]],[[1107,493],[1052,518]],[[1073,513],[1054,522]]];
function cr(a,b,c,d,t){var t2=t*t,t3=t2*t;return .5*(2*b+(c-a)*t+(2*a-5*b+4*c-d)*t2+(3*b-a-3*c+d)*t3);}
function at(A,i,k,t){var n=A.length-1;var a=A[Math.max(i-1,0)][k],b=A[i][k],c=A[Math.min(i+1,n)][k],d=A[Math.min(i+2,n)][k];return [cr(a[0],b[0],c[0],d[0],t),cr(a[1],b[1],c[1],d[1],t)];}
function build(A,spf){var s="",o=[];for(var i=0;i<A.length-1;i++){var d=Math.hypot(A[i+1][0][0]-A[i][0][0],A[i+1][0][1]-A[i][0][1]);var n=Math.max(1,Math.ceil(d/spf(i)));for(var j=0;j<n;j++){var t=j/n,O=at(A,i,0,t),I=at(A,i,1,t);s+="M"+O[0].toFixed(1)+" "+O[1].toFixed(1)+"L"+I[0].toFixed(1)+" "+I[1].toFixed(1);}for(var m=0;m<10;m++){var p=at(A,i,0,m/10);o.push(p[0].toFixed(1)+","+p[1].toFixed(1));}}var l=A[A.length-1];s+="M"+l[0][0]+" "+l[0][1]+"L"+l[1][0]+" "+l[1][1];o.push(l[0][0]+","+l[0][1]);return [s,o.join(" ")];}
var a=build(P,function(i){return i<8?9:i<14?6.5:4.5;}),b=build(Q,function(i){return i<7?4:i<9?6:9;});
document.getElementById("comb").innerHTML='<path d="'+a[0]+'" fill="none" stroke="#1fdc1f" stroke-width="1" opacity=".9"/><path d="'+b[0]+'" fill="none" stroke="#1fdc1f" stroke-width="1" opacity=".9"/><polyline points="'+a[1]+'" fill="none" stroke="#22dd22" stroke-width="1.200"/><polyline points="'+b[1]+'" fill="none" stroke="#22dd22" stroke-width="1.200"/>';
})();
</script>
</body></html>
